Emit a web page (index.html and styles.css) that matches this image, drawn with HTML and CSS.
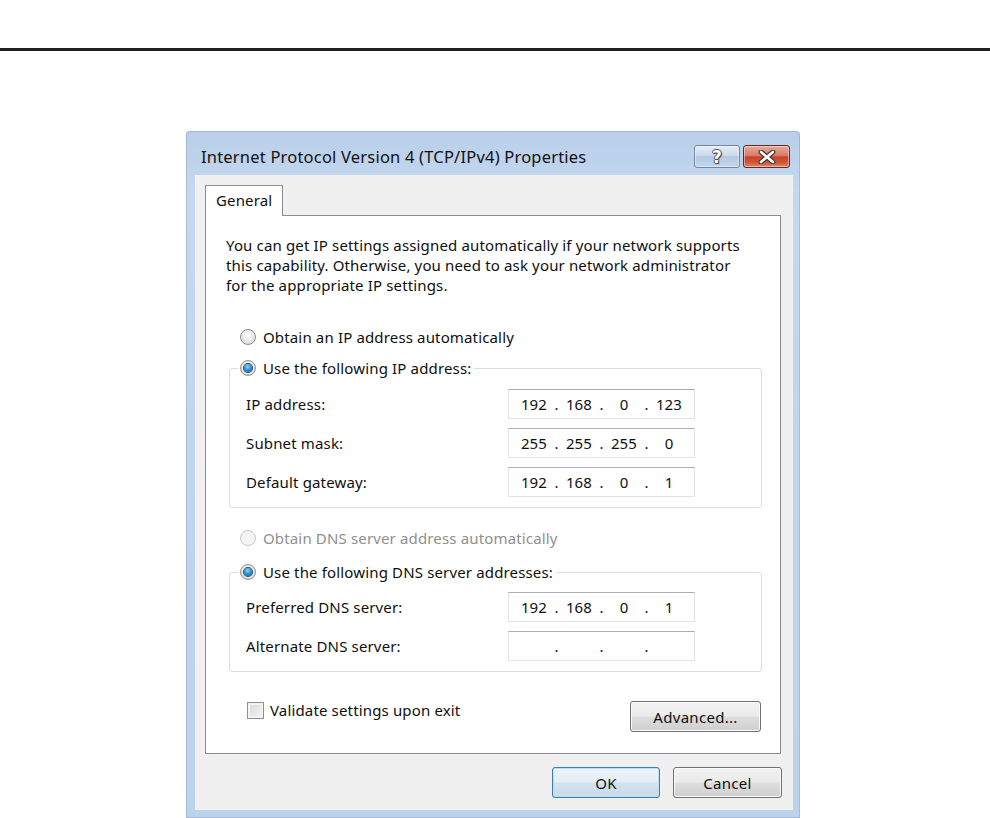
FILE: index.html
```html
<!DOCTYPE html>
<html lang="en">

<head>
    <meta charset="UTF-8">
    <meta name="viewport" content="width=device-width, initial-scale=1.0">
    <title>Internet Protocol Version 4 (TCP/IPv4) Properties</title>
    <link rel="stylesheet" href="styles.css">
</head>

<body>
    <div class="rule"></div>

    <div class="window">
        <!-- Title bar -->
        <div class="titlebar">
            <span class="title">Internet Protocol Version 4 (TCP/IPv4) Properties</span>
            <div class="caption-buttons">
                <button class="cap help"><span>?</span></button>
                <button class="cap close">
                    <svg width="20" height="14" viewBox="0 0 20 14">
                        <path d="M4 2 L16 12 M16 2 L4 12" stroke="#4a3a3a" stroke-width="5" stroke-linecap="round" />
                        <path d="M4 2 L16 12 M16 2 L4 12" stroke="#ffffff" stroke-width="2.6" stroke-linecap="round" />
                    </svg>
                </button>
            </div>
        </div>

        <div class="client">
            <!-- Tabs -->
            <div class="tabs">
                <div class="tab">General</div>
            </div>

            <div class="panel">
                <p class="intro">
                    You can get IP settings assigned automatically if your network supports<br>
                    this capability. Otherwise, you need to ask your network administrator<br>
                    for the appropriate IP settings.
                </p>

                <label class="option first">
                    <input type="radio" name="ip">
                    <span>Obtain an IP address automatically</span>
                </label>

                <fieldset class="group ip-group">
                    <legend>
                        <label class="option">
                            <input type="radio" name="ip" checked>
                            <span>Use the following IP address:</span>
                        </label>
                    </legend>
                    <div class="row">
                        <span class="row-label">IP address:</span>
                        <div class="ipbox">
                            <span class="octet">192</span><span class="dot">.</span><span class="octet">168</span><span class="dot">.</span><span class="octet">0</span><span class="dot">.</span><span class="octet">123</span>
                        </div>
                    </div>
                    <div class="row">
                        <span class="row-label">Subnet mask:</span>
                        <div class="ipbox">
                            <span class="octet">255</span><span class="dot">.</span><span class="octet">255</span><span class="dot">.</span><span class="octet">255</span><span class="dot">.</span><span class="octet">0</span>
                        </div>
                    </div>
                    <div class="row">
                        <span class="row-label">Default gateway:</span>
                        <div class="ipbox">
                            <span class="octet">192</span><span class="dot">.</span><span class="octet">168</span><span class="dot">.</span><span class="octet">0</span><span class="dot">.</span><span class="octet">1</span>
                        </div>
                    </div>
                </fieldset>

                <label class="option disabled">
                    <input type="radio" name="dns" disabled>
                    <span>Obtain DNS server address automatically</span>
                </label>

                <fieldset class="group dns-group">
                    <legend>
                        <label class="option">
                            <input type="radio" name="dns" checked>
                            <span>Use the following DNS server addresses:</span>
                        </label>
                    </legend>
                    <div class="row">
                        <span class="row-label">Preferred DNS server:</span>
                        <div class="ipbox">
                            <span class="octet">192</span><span class="dot">.</span><span class="octet">168</span><span class="dot">.</span><span class="octet">0</span><span class="dot">.</span><span class="octet">1</span>
                        </div>
                    </div>
                    <div class="row">
                        <span class="row-label">Alternate DNS server:</span>
                        <div class="ipbox">
                            <span class="octet"></span><span class="dot">.</span><span class="octet"></span><span class="dot">.</span><span class="octet"></span><span class="dot">.</span><span class="octet"></span>
                        </div>
                    </div>
                </fieldset>

                <div class="panel-foot">
                    <label class="check">
                        <input type="checkbox">
                        <span>Validate settings upon exit</span>
                    </label>
                    <button class="btn advanced">Advanced...</button>
                </div>
            </div>

            <!-- Dialog buttons -->
            <div class="dialog-buttons">
                <button class="btn default">OK</button>
                <button class="btn">Cancel</button>
            </div>
        </div>
    </div>
</body>

</html>
```

FILE: styles.css
```css
body {
    margin: 0;
    background: #ffffff;
    font-family: "Noto Sans", "Open Sans", sans-serif;
    font-size: 15px;
    letter-spacing: 0.15px;
    color: #0f0f0f;
}

.rule {
    height: 3px;
    margin-top: 48px;
    background: #231f20;
}

/* Window frame */
.window {
    width: 614px;
    height: 687px;
    margin: 80px 0 0 186px;
    padding: 0 7px 8px 9px;
    box-sizing: border-box;
    border-radius: 4px 4px 0 0;
    background: linear-gradient(#b9cfe9, #c4d8ee 60px, #bcd3ec);
    box-shadow: inset 0 0 0 1px rgba(110, 130, 160, 0.3);
}

.titlebar {
    height: 44px;
    display: flex;
    align-items: center;
    padding: 14px 3px 7px 6px;
    box-sizing: border-box;
}

.title {
    font-size: 16.5px;
    letter-spacing: 0.2px;
    line-height: 23px;
    color: #111111;
}

.caption-buttons {
    margin-left: auto;
    display: flex;
    gap: 3px;
}

.cap {
    height: 23px;
    padding: 0;
    border-radius: 3px;
    display: flex;
    align-items: center;
    justify-content: center;
    box-shadow: inset 0 0 0 1px rgba(255, 255, 255, 0.45);
}

.cap.help {
    width: 46px;
    border: 1px solid #6c87a9;
    background: linear-gradient(#e4edf7, #cddbec 45%, #b4c9e2 50%, #c3d5ea);
}

.cap.help span {
    font-family: "DejaVu Sans", sans-serif;
    font-weight: bold;
    font-size: 17px;
    line-height: 20px;
    color: #ffffff;
    text-shadow: 1px 0 0 #4d5560, -1px 0 0 #4d5560, 0 1px 0 #4d5560, 0 -1px 0 #4d5560, 1px 1px 1px #333;
}

.cap.close {
    width: 47px;
    border: 1px solid #5e2a26;
    background: linear-gradient(#e9a899, #d87d66 45%, #c7432a 52%, #d0583a 80%, #df8a6d);
}

/* Client area */
.client {
    height: 635px;
    background: #f0f0f0;
    padding: 10px 12px 0 10px;
    box-sizing: border-box;
}

.tabs {
    display: flex;
}

.tab {
    position: relative;
    z-index: 1;
    width: 78px;
    height: 31px;
    margin-bottom: -1px;
    padding-left: 10px;
    box-sizing: border-box;
    border: 1px solid #898c95;
    border-bottom: none;
    background: #ffffff;
    line-height: 29px;
}

.panel {
    height: 539px;
    border: 1px solid #898c95;
    background: #ffffff;
    padding: 19px 18px 0 20px;
    box-sizing: border-box;
}

.intro {
    margin: 0;
    line-height: 20px;
    white-space: nowrap;
}

.option {
    display: flex;
    align-items: center;
    height: 20px;
    white-space: nowrap;
}

.option.first {
    margin-top: 32px;
    padding-left: 14px;
}

.option.disabled {
    margin-top: 20px;
    padding-left: 14px;
    color: #8f8f8f;
}

input[type="radio"] {
    appearance: none;
    width: 16px;
    height: 16px;
    margin: 0 7px 0 0;
    border: 1px solid #8e8f8f;
    border-radius: 50%;
    box-sizing: border-box;
    background: radial-gradient(circle at 50% 40%, #ffffff, #e6e6e6 55%, #cfcfcf);
    display: flex;
    align-items: center;
    justify-content: center;
}

input[type="radio"]:checked::after {
    content: "";
    width: 8px;
    height: 8px;
    border-radius: 50%;
    background: radial-gradient(circle at 45% 35%, #8fd3fa, #1d7ec4 60%, #0a4f86);
    box-shadow: 0 0 0 1px #1f4d72;
}

input[type="radio"]:disabled {
    border-color: #c8c8c8;
    background: #f4f4f4;
}

/* Group boxes */
.group {
    margin: 11px 0 0 3px;
    padding: 11px 0 10px 16px;
    border: 1px solid #d5dfe5;
    border-radius: 3px;
    display: flex;
    flex-direction: column;
    gap: 9px;
}

.group legend {
    margin-left: -8px;
    padding: 0 3px 0 2px;
}

.dns-group {
    margin-top: 14px;
    padding-top: 10px;
}

.row {
    display: flex;
    align-items: center;
    height: 30px;
}

.row-label {
    width: 262px;
}

.ipbox {
    width: 187px;
    height: 30px;
    padding-left: 7px;
    box-sizing: border-box;
    border: 1px solid #e2e3ea;
    border-top-color: #abadb3;
    background: #ffffff;
    display: flex;
    align-items: center;
}

.octet {
    width: 36px;
    text-align: center;
}

.dot {
    width: 9px;
    text-align: center;
}

/* Bottom of the tab page */
.panel-foot {
    margin-top: 28px;
    padding: 0 1px 0 21px;
    display: flex;
    justify-content: space-between;
    align-items: flex-start;
}

.check {
    display: flex;
    align-items: center;
    height: 20px;
}

input[type="checkbox"] {
    appearance: none;
    width: 17px;
    height: 17px;
    margin: 0 6px 0 0;
    border: 1px solid #8e8f8f;
    box-sizing: border-box;
    background: linear-gradient(135deg, #d8d8d8, #f6f6f6);
    box-shadow: inset 0 0 0 2px #f3f3f3;
}

/* Buttons */
.btn {
    height: 31px;
    padding: 0;
    font-family: inherit;
    font-size: 15px;
    letter-spacing: 0.3px;
    color: #0f0f0f;
    border: 1px solid #707070;
    border-radius: 3px;
    background: linear-gradient(#f2f2f2, #ebebeb 48%, #dddddd 52%, #cfcfcf);
    box-shadow: inset 0 0 0 1px #fbfbfb;
}

.btn.advanced {
    width: 131px;
    margin-top: 1px;
}

.dialog-buttons {
    margin: 13px -1px 0 0;
    display: flex;
    justify-content: flex-end;
    gap: 13px;
}

.dialog-buttons .btn {
    width: 109px;
}

.btn.default {
    width: 108px;
    border-color: #3c7fb1;
    background: linear-gradient(#eef5fa, #e3edf4 48%, #d3e3ee 52%, #c8dbe8);
    box-shadow: inset 0 0 0 1px #b7e0f7;
}
```
